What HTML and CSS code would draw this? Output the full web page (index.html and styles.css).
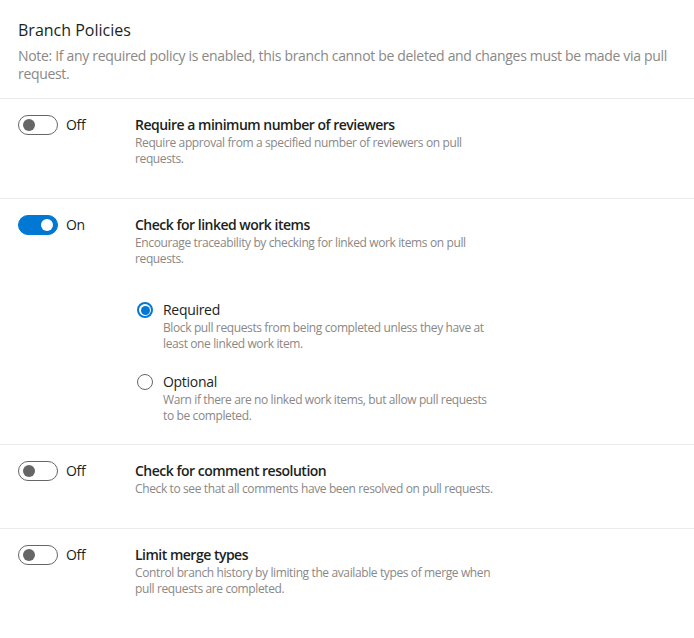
FILE: index.html
```html
<!DOCTYPE html>
<html lang="en">
<head>
<meta charset="utf-8">
<title>Branch Policies</title>
<link rel="stylesheet" href="styles.css">
</head>
<body>
<div class="page">
  <header class="header">
    <h1 class="title">Branch Policies</h1>
    <p class="note">Note: If any required policy is enabled, this branch cannot be deleted and changes must be made via pull request.</p>
  </header>

  <section class="row">
    <div class="switch-col">
      <span class="toggle"><span class="knob"></span></span>
      <span class="toggle-text">Off</span>
    </div>
    <div class="body">
      <div class="row-title">Require a minimum number of reviewers</div>
      <div class="desc">Require approval from a specified number of reviewers on pull requests.</div>
    </div>
  </section>

  <section class="row row-options">
    <div class="switch-col">
      <span class="toggle on"><span class="knob"></span></span>
      <span class="toggle-text">On</span>
    </div>
    <div class="body">
      <div class="row-title">Check for linked work items</div>
      <div class="desc">Encourage traceability by checking for linked work items on pull requests.</div>
      <div class="options">
        <div class="option">
          <span class="radio checked"><span class="dot"></span></span>
          <div class="option-body">
            <div class="option-label">Required</div>
            <div class="desc option-desc">Block pull requests from being completed unless they have at least one linked work item.</div>
          </div>
        </div>
        <div class="option">
          <span class="radio"></span>
          <div class="option-body">
            <div class="option-label">Optional</div>
            <div class="desc option-desc">Warn if there are no linked work items, but allow pull requests to be completed.</div>
          </div>
        </div>
      </div>
    </div>
  </section>

  <section class="row">
    <div class="switch-col">
      <span class="toggle"><span class="knob"></span></span>
      <span class="toggle-text">Off</span>
    </div>
    <div class="body">
      <div class="row-title">Check for comment resolution</div>
      <div class="desc">Check to see that all comments have been resolved on pull requests.</div>
    </div>
  </section>

  <section class="row last">
    <div class="switch-col">
      <span class="toggle"><span class="knob"></span></span>
      <span class="toggle-text">Off</span>
    </div>
    <div class="body">
      <div class="row-title">Limit merge types</div>
      <div class="desc">Control branch history by limiting the available types of merge when pull requests are completed.</div>
    </div>
  </section>
</div>
</body>
</html>
```

FILE: styles.css
```css
* { box-sizing: border-box; }

html, body {
  margin: 0;
  padding: 0;
  background: #ffffff;
}

body {
  font-family: "Open Sans", "Noto Sans", "Liberation Sans", sans-serif;
  color: #201f1e;
  -webkit-font-smoothing: antialiased;
}

.page {
  width: 694px;
}

.header {
  padding: 19px 18px 15px 18px;
  border-bottom: 1px solid #eaeaea;
}

.title {
  margin: 0;
  font-size: 16px;
  font-weight: 400;
  line-height: 22px;
  color: #201f1e;
}

.note {
  margin: 6px 0 0 0;
  font-size: 14px;
  line-height: 18px;
  letter-spacing: -0.32px;
  color: #8a8886;
}

.row {
  display: flex;
  padding: 16px 18px 31px 18px;
  border-bottom: 1px solid #eaeaea;
}

.row.row-options {
  padding-bottom: 20px;
}

.row.last {
  border-bottom: none;
}

.switch-col {
  width: 117px;
  flex: none;
  display: flex;
  align-items: center;
  height: 20px;
}

.toggle {
  position: relative;
  width: 40px;
  height: 20px;
  border: 1px solid #666666;
  border-radius: 10px;
  background: #ffffff;
  flex: none;
}

.toggle .knob {
  position: absolute;
  top: 3px;
  left: 4px;
  width: 12px;
  height: 12px;
  border-radius: 50%;
  background: #666666;
}

.toggle.on {
  background: #0078d4;
  border-color: #0078d4;
}

.toggle.on .knob {
  left: auto;
  right: 4px;
  background: #ffffff;
}

.toggle-text {
  margin-left: 8px;
  font-size: 14px;
  line-height: 20px;
  letter-spacing: -0.3px;
  color: #201f1e;
}

.body {
  flex: 1;
}

.row-title {
  font-size: 14px;
  font-weight: 600;
  line-height: 20px;
  letter-spacing: -0.5px;
  color: #201f1e;
}

.desc {
  max-width: 366px;
  font-size: 12px;
  line-height: 16px;
  letter-spacing: -0.38px;
  color: #8a8886;
}

.options {
  padding-top: 13px;
}

.option {
  display: flex;
  margin-top: 20px;
  padding-left: 2px;
}

.radio {
  position: relative;
  flex: none;
  width: 16px;
  height: 16px;
  margin-top: 2px;
  border: 1px solid #666666;
  border-radius: 50%;
  background: #ffffff;
}

.radio.checked {
  border: 2px solid #0078d4;
}

.radio .dot {
  position: absolute;
  top: 1.5px;
  left: 1.5px;
  width: 9px;
  height: 9px;
  border-radius: 50%;
  background: #0078d4;
}

.option-body {
  margin-left: 10px;
}

.option-label {
  font-size: 14px;
  line-height: 20px;
  letter-spacing: -0.3px;
  color: #201f1e;
}

.option-desc {
  max-width: 330px;
}
```
